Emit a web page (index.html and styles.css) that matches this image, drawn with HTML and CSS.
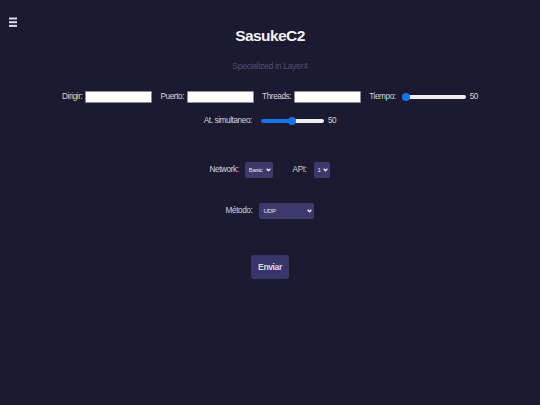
FILE: index.html
```html
<!DOCTYPE html>
<html lang="es">
<head>
<meta charset="utf-8">
<title>SasukeC2</title>
<link rel="stylesheet" href="styles.css">
</head>
<body>
<button class="menu" aria-label="menu">
  <svg width="8" height="10" viewBox="0 0 8 10"><rect x="0" y="0.5" width="8" height="2"/><rect x="0" y="4.2" width="8" height="2"/><rect x="0" y="7.9" width="8" height="2"/></svg>
</button>
<main class="main">
  <h1 class="title">SasukeC2</h1>
  <p class="subtitle">Specialized in Layer4</p>
  <div class="row row-1">
    <label class="lbl">Dirigir:</label><input class="txt" type="text">
    <label class="lbl">Puerto:</label><input class="txt" type="text">
    <label class="lbl">Threads:</label><input class="txt" type="text">
    <label class="lbl lbl-time">Tiempo:</label><input class="range" type="range" min="10" max="3600" value="50" style="--p:4%"><span class="val">50</span>
  </div>
  <div class="row row-2">
    <label class="lbl lbl-sim">At. simultaneo:</label><input class="range range-wide" type="range" min="0" max="100" value="50" style="--p:50%"><span class="val">50</span>
  </div>
  <div class="row row-3">
    <label class="lbl lbl-net">Network:</label>
    <span class="sel sel-net"><select><option>Basic</option></select><svg class="chev" width="5" height="4" viewBox="0 0 5 4"><path d="M0.6 0.8 L2.5 2.8 L4.4 0.8" /></svg></span>
    <label class="lbl lbl-api">API:</label>
    <span class="sel sel-api"><select><option>1</option></select><svg class="chev" width="5" height="4" viewBox="0 0 5 4"><path d="M0.6 0.8 L2.5 2.8 L4.4 0.8" /></svg></span>
  </div>
  <div class="row row-4">
    <label class="lbl lbl-met">Método:</label>
    <span class="sel sel-met"><select><option>UDP</option></select><svg class="chev" width="5" height="4" viewBox="0 0 5 4"><path d="M0.6 0.8 L2.5 2.8 L4.4 0.8" /></svg></span>
  </div>
  <div class="row row-5">
    <button class="send">Enviar</button>
  </div>
</main>
</body>
</html>
```
FILE: styles.css
```css
html, body {
  margin: 0;
  padding: 0;
  background: #1b1a31;
  height: 100%;
}
body {
  font-family: "Liberation Sans", Arial, sans-serif;
  color: #d4d4dc;
  position: relative;
}
.menu {
  position: absolute;
  left: 9px;
  top: 17px;
  padding: 0;
  margin: 0;
  border: 0;
  background: none;
  line-height: 0;
}
.menu svg { fill: #dcdcea; display: block; }
.main {
  padding-top: 26px;
  display: flex;
  flex-direction: column;
  align-items: center;
}
.title {
  margin: 0;
  font-size: 15.5px;
  line-height: 20px;
  letter-spacing: -0.6px;
  font-weight: bold;
  color: #f2f2f6;
}
.subtitle {
  margin: 14px 0 0;
  font-size: 8.6px;
  line-height: 12px;
  letter-spacing: -0.3px;
  color: #515072;
}
.row {
  display: flex;
  align-items: center;
  justify-content: center;
}
.row-1 { margin-top: 19px; height: 12px; }
.row-2 { margin-top: 12px; height: 12px; }
.row-3 { margin-top: 35px; height: 16px; }
.row-4 { margin-top: 25px; height: 16px; }
.row-5 { margin-top: 36px; }
.lbl, .val {
  font-size: 8.2px;
  line-height: 12px;
  letter-spacing: -0.4px;
  color: #d4d4dc;
}
.lbl { margin-right: 3px; }
.txt {
  box-sizing: border-box;
  width: 67px;
  height: 12px;
  margin: 0 8px 0 0;
  padding: 0;
  border: 1px solid #8d8c9c;
  border-radius: 1px;
  background: #ffffff;
}
.lbl-time { margin-right: 6px; }
.range {
  -webkit-appearance: none;
  appearance: none;
  width: 64px;
  height: 8px;
  margin: 0 4px 0 0;
  padding: 0;
  background: transparent;
}
.lbl-sim { margin-right: 9px; }
.range-wide { width: 63px; }
.range::-webkit-slider-runnable-track {
  height: 4px;
  border-radius: 2px;
  background: linear-gradient(to right, #1673ec var(--p), #efeff2 var(--p));
}
.range::-webkit-slider-thumb {
  -webkit-appearance: none;
  appearance: none;
  width: 8px;
  height: 8px;
  margin-top: -2px;
  border-radius: 50%;
  background: #1673ec;
  border: 0;
}
.lbl-net { margin-right: 6px; }
.lbl-api { margin-left: 20px; margin-right: 8px; }
.lbl-met { margin-right: 7px; }
.sel {
  position: relative;
  display: block;
  height: 16px;
}
.sel select {
  -webkit-appearance: none;
  appearance: none;
  display: block;
  box-sizing: border-box;
  height: 16px;
  line-height: 16px;
  margin: 0;
  padding: 0 0 0 3px;
  border: 0;
  border-radius: 2px;
  background: #3c3a6c;
  color: #e4e4ee;
  font-family: "Liberation Sans", Arial, sans-serif;
  font-size: 6.2px;
  letter-spacing: -0.2px;
  outline: none;
}
.sel-net select { width: 28px; padding-left: 4px; }
.sel-api select { width: 16px; padding-left: 3px; }
.sel-met select { width: 55px; padding-left: 4px; }
.chev {
  position: absolute;
  right: 2px;
  top: 6px;
  fill: none;
  stroke: #e8e8f2;
  stroke-width: 1.3;
}
.send {
  box-sizing: border-box;
  width: 38px;
  height: 24px;
  margin: 0;
  padding: 0;
  border: 0;
  border-radius: 3px;
  background: #38356a;
  color: #dcdce8;
  font-family: "Liberation Sans", Arial, sans-serif;
  font-weight: bold;
  font-size: 8.6px;
  letter-spacing: -0.4px;
}
```
